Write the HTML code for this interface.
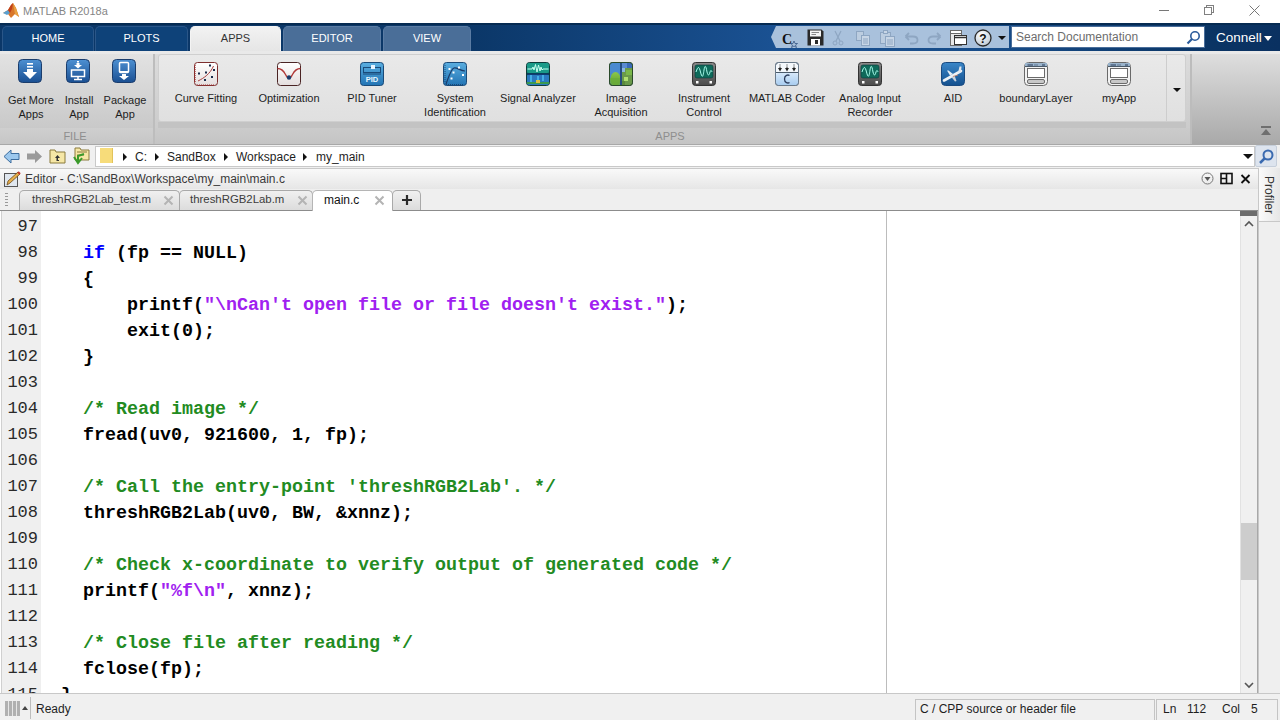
<!DOCTYPE html>
<html><head><meta charset="utf-8">
<style>
*{box-sizing:border-box;margin:0;padding:0}
html,body{width:1280px;height:720px;overflow:hidden;background:#fff;font-family:"Liberation Sans",sans-serif;position:relative}
.a{position:absolute}
#title{left:0;top:0;width:1280px;height:23px;background:#fff}
#title .t{left:23px;top:5px;font-size:11px;color:#858585}
#band{left:0;top:23px;width:1280px;height:28px;background:#0b3a6c;border-top:2px solid #062b52}
.tab{top:1px;height:26px;border-radius:5px 5px 0 0;color:#fff;font-size:11px;text-align:center;line-height:22px;background:#0e4279;border:1px solid #2a5688;border-bottom:none}
.tab.ctx{background:#4a6e98;border-color:#5b7ca3}
.tab.act{background:linear-gradient(#f2f2f2,#e4e4e4);color:#333;border-color:#f4f4f4;height:28px}
#ribbon{left:0;top:51px;width:1280px;height:93px;background:linear-gradient(#e6e6e6,#d2d2d2)}
#addr{left:0;top:144px;width:1280px;height:24px;background:#f0f0f0}
#edtitle{left:0;top:168px;width:1258px;height:21px;background:linear-gradient(#fafafa,#e6e6e6)}
#tabs{left:0;top:189px;width:1258px;height:22px;background:#efefef;border-bottom:1px solid #8c8c8c}
#code{left:0;top:211px;width:1258px;height:482px;background:#fff;overflow:hidden}
#gutter{left:1px;top:0;width:40px;height:482px;background:#efefef;border-left:1px solid #d0d0d0}
#status{left:0;top:693px;width:1280px;height:27px;background:#f0f0f0;border-top:1px solid #c8c8c8}
.nm{color:#2a2a2a;font-size:17px !important}
.ln{font-family:"Liberation Mono",monospace;font-size:18.33px;line-height:26px;white-space:pre}
.ln b{font-weight:bold}
.kw{color:#0000ff}
.str{color:#a020f0}
.cm{color:#228b22}
.lab{width:82px;text-align:center;font-size:11px;line-height:14px;color:#1e1e1e;white-space:nowrap}
.rl{font-size:11px;text-align:center;line-height:14px}
.ic{position:absolute;width:24px;height:24px}
.tri{width:0;height:0;border-top:4px solid transparent;border-bottom:4px solid transparent;border-left:4px solid #111}
.at{top:6px;font-size:12px;color:#1e1e1e}
.etab{top:1px;height:20px;border:1px solid #a9a9a9;border-bottom:none;border-radius:5px 5px 0 0;background:linear-gradient(#f0f0f0,#dcdcdc)}
.etab.act{background:#fff;height:22px;border-color:#b5b5b5}
.etab span{position:absolute;top:2px;font-size:11.4px;color:#3c3c3c;white-space:nowrap}
.etab i{position:absolute;top:-1px;font-style:normal;font-size:17px;color:#bcbcbc}
</style></head><body>
<div id="title" class="a"><div class="t a">MATLAB R2018a</div>
<svg class="a" style="left:2px;top:2px" width="18" height="17" viewBox="0 0 18 17"><path d="M1 11 L6 8 L9 3 L11 1 L14 6 L17 15 L13 12 L9 16 L6 12 Z" fill="#d8762a"/><path d="M1 11 L6 8 L8 11 L5 13 Z" fill="#5aa0d0"/><path d="M6 8 L9 3 L11 1 L10 7 L8 11 Z" fill="#c0401a"/><path d="M11 1 L14 6 L17 15 L13 12 Z" fill="#e8a040"/></svg>
 <div class="a" style="left:1159px;top:10px;width:10px;height:1px;background:#777"></div>
 <div class="a" style="left:1206px;top:5px;width:8px;height:8px;border:1px solid #808080"></div>
 <div class="a" style="left:1204px;top:7px;width:8px;height:8px;border:1px solid #808080;background:#fff"></div>
 <svg class="a" style="left:1249px;top:5px" width="11" height="11" viewBox="0 0 11 11"><path d="M0.5 0.5 L10.5 10.5 M10.5 0.5 L0.5 10.5" stroke="#777" stroke-width="1"/></svg>
</div>
<div id="band" class="a">
 <div class="a" style="left:0;top:0;width:1280px;height:26px;background:linear-gradient(90deg,#0b3768 0,#0b3768 470px,#1a5192 772px,#174c88 1000px,#0a3464 1210px,#0a3161 1280px)"></div>
 <div class="tab a" style="left:2px;width:92px">HOME</div>
 <div class="tab a" style="left:95px;width:93px">PLOTS</div>
 <div class="tab a act" style="left:190px;width:91px">APPS</div>
 <div class="tab a ctx" style="left:283px;width:98px">EDITOR</div>
 <div class="tab a ctx" style="left:383px;width:88px">VIEW</div>

 <div class="a" style="left:771px;top:1px;width:238px;height:22px;background:#a9c1dc;clip-path:polygon(5px 0,100% 0,100% 100%,5px 100%,0 50%)"></div>
 <div class="a" style="left:1011px;top:1px;width:194px;height:22px;background:#fff;border:1px solid #4a6e9a"></div>
 <div class="a" style="left:1016px;top:5px;font-size:12px;color:#6d6d6d">Search Documentation</div>

 <svg class="a" style="left:782px;top:6px" width="17" height="17" viewBox="0 0 17 17"><text x="0" y="13" font-family="Liberation Serif" font-weight="bold" font-size="14" fill="#111">C</text><path d="M12 10 L13 12.5 L15.5 12.5 L13.5 14 L14.5 16.5 L12 15 L9.5 16.5 L10.5 14 L8.5 12.5 L11 12.5 Z" fill="none" stroke="#2a4a7a" stroke-width="0.7"/></svg>
 <svg class="a" style="left:807px;top:4px" width="17" height="17" viewBox="0 0 17 17"><path d="M0.5 0.5 H14.5 L16.5 2.5 V16.5 H0.5 Z" fill="#2a2a2a"/><rect x="3" y="1.5" width="11" height="6" fill="#f4f4f4"/><path d="M4.5 3.5 H12 M4.5 5.5 H9" stroke="#888"/><rect x="4" y="10" width="9" height="6.5" fill="#fff"/><rect x="8" y="11" width="3" height="4" fill="#2a2a2a"/></svg>
 <svg class="a" style="left:832px;top:5px" width="12" height="16" viewBox="0 0 12 16"><path d="M3 1 L8 11 M9 1 L4 11" stroke="#8ea6c2" stroke-width="1.2"/><circle cx="3" cy="13" r="2" fill="none" stroke="#8ea6c2"/><circle cx="9" cy="13" r="2" fill="none" stroke="#8ea6c2"/></svg>
 <svg class="a" style="left:856px;top:5px" width="14" height="16" viewBox="0 0 14 16"><rect x="0.5" y="1.5" width="7" height="9" fill="#bccde0" stroke="#8ea6c2"/><rect x="5.5" y="5.5" width="8" height="10" fill="#c8d6e6" stroke="#8ea6c2"/><path d="M7 9 H12 M7 11 H12 M7 13 H12" stroke="#8ea6c2"/></svg>
 <svg class="a" style="left:880px;top:5px" width="15" height="17" viewBox="0 0 15 17"><rect x="0.5" y="2.5" width="10" height="11" fill="#bccde0" stroke="#8ea6c2"/><rect x="3.5" y="0.5" width="4" height="3" fill="#c8d6e6" stroke="#8ea6c2"/><rect x="5.5" y="6.5" width="9" height="10" fill="#c8d6e6" stroke="#8ea6c2"/><path d="M7 10 H13 M7 12 H13 M7 14 H13" stroke="#8ea6c2"/></svg>
 <svg class="a" style="left:904px;top:7px" width="15" height="13" viewBox="0 0 15 13"><path d="M1.5 4.5 L5 1 M1.5 4.5 L5 8 M1.5 4.5 H9 C12 4.5 13.5 6 13.5 8 C13.5 10 12 11.5 9 11.5 H6" stroke="#8ea6c2" stroke-width="1.8" fill="none"/></svg>
 <svg class="a" style="left:927px;top:7px" width="15" height="13" viewBox="0 0 15 13"><path d="M13.5 4.5 L10 1 M13.5 4.5 L10 8 M13.5 4.5 H6 C3 4.5 1.5 6 1.5 8 C1.5 10 3 11.5 6 11.5 H9" stroke="#8ea6c2" stroke-width="1.8" fill="none"/></svg>
 <svg class="a" style="left:950px;top:5px" width="17" height="17" viewBox="0 0 17 17"><rect x="0.5" y="0.5" width="11" height="3" fill="#fff" stroke="#6a6a6a"/><rect x="0.5" y="3.5" width="11" height="12" fill="#e8e8e8" stroke="#6a6a6a"/><rect x="4.5" y="5.5" width="12" height="9" fill="#fff" stroke="#333"/><path d="M4.5 7.5 H16.5" stroke="#333" stroke-width="1.5"/></svg>
 <svg class="a" style="left:974px;top:4px" width="18" height="18" viewBox="0 0 18 18"><defs><radialGradient id="gh" cx="0.4" cy="0.3" r="0.8"><stop offset="0" stop-color="#fff"/><stop offset="1" stop-color="#b8c4d0"/></radialGradient></defs><circle cx="9" cy="9" r="8" fill="url(#gh)" stroke="#2a2a2a" stroke-width="1.3"/><text x="9" y="13.5" text-anchor="middle" font-family="Liberation Sans" font-weight="bold" font-size="12" fill="#111">?</text></svg>
 <div class="a" style="left:998px;top:11px;width:0;height:0;border-left:4px solid transparent;border-right:4px solid transparent;border-top:4px solid #111"></div>
 <svg class="a" style="left:1186px;top:5px" width="15" height="15" viewBox="0 0 15 15"><circle cx="9" cy="6" r="4.2" fill="none" stroke="#2a5a9a" stroke-width="1.6"/><path d="M6 9 L1.5 13.5" stroke="#2a5a9a" stroke-width="2.2"/></svg>
 <div class="a" style="left:1216px;top:5px;font-size:13.5px;color:#fff">Connell</div>
 <div class="a" style="left:1264px;top:11px;width:0;height:0;border-left:4px solid transparent;border-right:4px solid transparent;border-top:5px solid #fff"></div>
</div>
<div id="ribbon" class="a">
 <div class="a" style="left:0;top:0;width:1280px;height:3px;background:#e9e9e9"></div>
 <div class="a" style="left:0;top:3px;width:153px;height:74px;background:linear-gradient(#e2e2e2,#c9c9c9)"></div>
 <div class="a" style="left:0;top:77px;width:153px;height:16px;background:linear-gradient(#cfcfcf,#c6c6c6)"></div>
 <div class="a rl" style="left:60px;top:78px;width:30px;color:#8e8e8e">FILE</div>
 <div class="a" style="left:153px;top:3px;width:2px;height:90px;background:#bdbdbd"></div>
 <div class="a" style="left:155px;top:3px;width:1036px;height:90px;background:linear-gradient(#dcdcdc,#c8c8c8)"></div>
 <div class="a" style="left:158px;top:3px;width:1028px;height:68px;background:linear-gradient(#e9e9e9,#e0e0e0);border:1px solid #cfcfcf;border-radius:3px"></div>
 <div class="a" style="left:158px;top:71px;width:1028px;height:6px;background:#c3c3c3"></div>
 <div class="a" style="left:155px;top:77px;width:1036px;height:16px;background:linear-gradient(#cbcbcb,#c4c4c4)"></div>
 <div class="a rl" style="left:640px;top:78px;width:60px;color:#8e8e8e">APPS</div>
 <div class="a" style="left:1166px;top:4px;width:1px;height:66px;background:#cdcdcd"></div>
 <div class="a" style="left:1173px;top:37px;width:0;height:0;border-left:4px solid transparent;border-right:4px solid transparent;border-top:4px solid #111"></div>
 <div class="a" style="left:1190px;top:3px;width:2px;height:90px;background:#bcbcbc"></div>
 <div class="a" style="left:1192px;top:3px;width:88px;height:90px;background:linear-gradient(#dedede,#a9a9a9)"></div>
 <div class="a" style="left:1261px;top:75px;width:10px;height:2px;background:#6f6f6f"></div>
 <div class="a" style="left:1261px;top:78px;width:0;height:0;border-left:5px solid transparent;border-right:5px solid transparent;border-bottom:6px solid #6f6f6f"></div>
 <div class="a lab" style="left:-10px;top:42px">Get More<br>Apps</div>
<div class="a lab" style="left:38px;top:42px">Install<br>App</div>
<div class="a lab" style="left:84px;top:42px">Package<br>App</div>
<div class="a lab" style="left:165px;top:40px">Curve Fitting</div>
<div class="a lab" style="left:248px;top:40px">Optimization</div>
<div class="a lab" style="left:331px;top:40px">PID Tuner</div>
<div class="a lab" style="left:414px;top:40px">System<br>Identification</div>
<div class="a lab" style="left:497px;top:40px">Signal Analyzer</div>
<div class="a lab" style="left:580px;top:40px">Image<br>Acquisition</div>
<div class="a lab" style="left:663px;top:40px">Instrument<br>Control</div>
<div class="a lab" style="left:746px;top:40px">MATLAB Coder</div>
<div class="a lab" style="left:829px;top:40px">Analog Input<br>Recorder</div>
<div class="a lab" style="left:912px;top:40px">AID</div>
<div class="a lab" style="left:995px;top:40px">boundaryLayer</div>
<div class="a lab" style="left:1078px;top:40px">myApp</div>
ICONS
<svg class="a" style="left:18px;top:8px" width="24" height="24" viewBox="0 0 24 24"><defs><linearGradient id="gb" x1="0" y1="0" x2="0" y2="1"><stop offset="0" stop-color="#4d90d2"/><stop offset="1" stop-color="#1a4f92"/></linearGradient>
<linearGradient id="gb2" x1="0" y1="0" x2="0" y2="1"><stop offset="0" stop-color="#5aaee0"/><stop offset="1" stop-color="#2274b4"/></linearGradient>
<linearGradient id="gw" x1="0" y1="0" x2="0" y2="1"><stop offset="0" stop-color="#ffffff"/><stop offset="1" stop-color="#e4dede"/></linearGradient>
<linearGradient id="gsig" x1="0" y1="0" x2="0" y2="1"><stop offset="0" stop-color="#1e8a7a"/><stop offset="0.5" stop-color="#12a090"/><stop offset="0.52" stop-color="#0a3d7a"/><stop offset="1" stop-color="#3aa0d0"/></linearGradient>
<linearGradient id="gmon" x1="0" y1="0" x2="0" y2="1"><stop offset="0" stop-color="#8a8a8a"/><stop offset="1" stop-color="#4a4a4a"/></linearGradient>
<linearGradient id="gaid" x1="0" y1="0" x2="0" y2="1"><stop offset="0" stop-color="#3a86c8"/><stop offset="1" stop-color="#14508e"/></linearGradient>
<linearGradient id="gcod" x1="0" y1="0" x2="0" y2="1"><stop offset="0" stop-color="#d6e8fa"/><stop offset="1" stop-color="#a9cdf0"/></linearGradient>
<linearGradient id="gimg" x1="0" y1="0" x2="0" y2="1"><stop offset="0" stop-color="#8cc84a"/><stop offset="1" stop-color="#5a9a2a"/></linearGradient></defs><rect x="0.5" y="0.5" width="23" height="23" rx="4" fill="url(#gb)" stroke="#1b3d6c"/><rect x="9" y="4" width="6" height="1.6" fill="#fff"/><rect x="9" y="7" width="6" height="1.6" fill="#fff"/><path d="M9 10 H15 V13 H19 L12 20 L5 13 H9 Z" fill="#fff"/></svg>
<svg class="a" style="left:66px;top:8px" width="24" height="24" viewBox="0 0 24 24"><rect x="0.5" y="0.5" width="23" height="23" rx="4" fill="url(#gb)" stroke="#1b3d6c"/><rect x="11" y="2" width="2" height="1.5" fill="#fff"/><path d="M10.5 4 H13.5 V6 H16 L12 9.5 L8 6 H10.5 Z" fill="#fff"/><rect x="5.5" y="11" width="13" height="6.5" fill="none" stroke="#fff" stroke-width="1.5"/><path d="M12 17.5 V20 M8 20.5 H16" stroke="#fff" stroke-width="1.5"/></svg>
<svg class="a" style="left:112px;top:8px" width="24" height="24" viewBox="0 0 24 24"><rect x="0.5" y="0.5" width="23" height="23" rx="4" fill="url(#gb)" stroke="#1b3d6c"/><rect x="7.5" y="3.5" width="9" height="10" rx="1" fill="none" stroke="#fff" stroke-width="1.5"/><rect x="8" y="12" width="8" height="1.5" fill="#fff"/><path d="M10 15 H14 V17 H17 L12 21 L7 17 H10 Z" fill="#fff"/></svg>
<svg class="a" style="left:194px;top:11px" width="24" height="24" viewBox="0 0 24 24"><rect x="0.5" y="0.5" width="23" height="23" rx="3" fill="url(#gw)" stroke="#7d2e2e"/><path d="M1 3 V21 M3 23 H21" stroke="#a03030" stroke-dasharray="1 1" stroke-width="1.2"/><path d="M4 19 C10 16 16 12 19.5 4" stroke="#a84040" stroke-width="1" fill="none"/><g fill="#1a2a4a"><rect x="4" y="10.5" width="2" height="2"/><rect x="11" y="9.5" width="2" height="2"/><rect x="15" y="2.5" width="2" height="2"/><rect x="19" y="7" width="2" height="2"/><rect x="17" y="14" width="2" height="2"/><rect x="10" y="17" width="2" height="2"/></g></svg>
<svg class="a" style="left:277px;top:11px" width="24" height="24" viewBox="0 0 24 24"><rect x="0.5" y="0.5" width="23" height="23" rx="3" fill="url(#gw)" stroke="#4a2424"/><path d="M0.5 6.5 C4 6.5 6.5 8.5 8.5 12.5 C9.7 15 10.8 16 12 16 C13.2 16 14.3 15 15.5 12.5 C17.5 8.5 20 6.5 23.5 6.5" stroke="#b03838" stroke-width="1.3" fill="none"/><circle cx="12" cy="15.5" r="2.2" fill="#1a3a6a"/></svg>
<svg class="a" style="left:360px;top:11px" width="24" height="24" viewBox="0 0 24 24"><rect x="0.5" y="0.5" width="23" height="23" rx="3" fill="url(#gb2)" stroke="#1a4a78"/><rect x="3.5" y="5.5" width="17" height="5" fill="none" stroke="#1a4a78" stroke-width="1"/><rect x="11" y="3" width="4" height="4" fill="#e8f4ff"/><path d="M3 12 H21" stroke="#1a4a78"/><text x="12" y="20" text-anchor="middle" font-family="Liberation Sans" font-weight="bold" font-size="7.5" fill="#e8f8ff">PID</text></svg>
<svg class="a" style="left:443px;top:11px" width="24" height="24" viewBox="0 0 24 24"><rect x="0.5" y="0.5" width="23" height="23" rx="3" fill="url(#gb2)" stroke="#1a4a78"/><path d="M2 3 V21 M3 22.5 H21" stroke="#1a4a78" stroke-dasharray="1 1"/><path d="M3 22 C6 14 8 7 11 6 C14 5 17 9 22 9" stroke="#1a3a68" stroke-width="1.2" fill="none"/><g fill="#fff"><rect x="5.5" y="6" width="2" height="2"/><rect x="9.5" y="9.5" width="2" height="2"/><rect x="15" y="4.5" width="2" height="2"/><rect x="19" y="12" width="2" height="2"/><rect x="7.5" y="15.5" width="2" height="2"/></g></svg>
<svg class="a" style="left:526px;top:11px" width="24" height="24" viewBox="0 0 24 24"><rect x="0.5" y="0.5" width="23" height="23" rx="3" fill="#127a6a" stroke="#0f3a3a"/><rect x="1" y="1" width="22" height="10" rx="2" fill="#1a9a88"/><rect x="1" y="12" width="22" height="11" rx="2" fill="#2a7ac0"/><path d="M1 12 H23" stroke="#0a2a5a" stroke-width="1.5"/><path d="M1 21 H23" stroke="#3a9a50" stroke-width="2"/><path d="M1.5 7 H6 L7 5 L8 8 L9.5 2.5 L11 10 L12.5 3 L14 9 L15 5 L16 8 L17 7 H22.5" stroke="#c8fff0" stroke-width="1" fill="none"/><path d="M5 13 V20 M12 14 V21 M17 13 V19" stroke="#4cc0f0" stroke-width="1.5"/><rect x="10" y="18" width="4" height="3" fill="#d8c040"/></svg>
<svg class="a" style="left:609px;top:11px" width="24" height="24" viewBox="0 0 24 24"><rect x="0.5" y="0.5" width="23" height="23" rx="3" fill="#4a88c8" stroke="#2a4a2a"/><rect x="1" y="1" width="10" height="10" fill="#4a8ad0"/><ellipse cx="6.5" cy="17" rx="5" ry="7" fill="url(#gimg)"/><path d="M1 23 V16 H11 V23 Z" fill="#6aac3a" opacity="0.8"/><g><rect x="13" y="1" width="10" height="22" fill="#6a9a4a"/><rect x="13" y="1" width="5" height="5" fill="#5a8ad0"/><rect x="18" y="1" width="5" height="5" fill="#3a6ab8"/><rect x="13" y="6" width="3" height="4" fill="#8ab8e0"/><rect x="17" y="8" width="6" height="5" fill="#7ab84a"/><rect x="15" y="15" width="4" height="4" fill="#b0e070"/><rect x="13" y="19" width="3" height="4" fill="#5a8a3a"/></g><path d="M12 1 V23" stroke="#1a3a6a" stroke-width="1.5"/><rect x="0.5" y="0.5" width="23" height="23" rx="3" fill="none" stroke="#2a4a2a"/></svg>
<svg class="a" style="left:692px;top:11px" width="24" height="24" viewBox="0 0 24 24"><rect x="0.5" y="0.5" width="23" height="23" rx="3" fill="url(#gmon)" stroke="#333"/><rect x="3" y="3" width="18" height="13" rx="2" fill="#0e6a5a" stroke="#0a3a3a" stroke-width="0.6"/><path d="M4 10 C6 4 7 4 8.5 10 C10 16 11 16 12 8 C13 2 14 4 15 10 C16 14 17 14 18 10 C18.7 8 19.3 8 20 10" stroke="#aaffee" stroke-width="1" fill="none"/><rect x="4" y="19" width="2.5" height="2.5" fill="#fff"/><rect x="17.5" y="19" width="2.5" height="2.5" fill="#fff"/></svg>
<svg class="a" style="left:775px;top:11px" width="24" height="24" viewBox="0 0 24 24"><rect x="0.5" y="0.5" width="23" height="23" rx="3" fill="#f4f8fc" stroke="#6a7a8a"/><path d="M1 10.5 H23" stroke="#4a5a6a"/><rect x="1" y="11" width="22" height="12" rx="2" fill="url(#gcod)"/><g stroke="#222" stroke-width="1"><path d="M5 2.5 V3.5 M12 2.5 V3.5 M19 2.5 V3.5 M5 4.5 V6 M12 4.5 V6 M19 4.5 V6"/></g><g fill="#222"><path d="M3 6 H7 L5 9.5 Z M10 6 H14 L12 9.5 Z M17 6 H21 L19 9.5 Z"/></g><path d="M14.5 13.5 C13 12.5 9.5 13 9.5 17 C9.5 21 13 21.5 14.5 20.5" stroke="#2a3a5a" stroke-width="1.3" fill="none"/><rect x="0.5" y="0.5" width="23" height="23" rx="3" fill="none" stroke="#6a7a8a"/></svg>
<svg class="a" style="left:858px;top:11px" width="24" height="24" viewBox="0 0 24 24"><rect x="0.5" y="0.5" width="23" height="23" rx="3" fill="url(#gmon)" stroke="#333"/><rect x="3" y="3" width="18" height="13" rx="2" fill="#0e6a5a" stroke="#0a3a3a" stroke-width="0.6"/><path d="M4 10 C6 4 7 4 8.5 10 C10 16 11 16 12 8 C13 2 14 4 15 10 C16 14 17 14 18 10 C18.7 8 19.3 8 20 10" stroke="#aaffee" stroke-width="1" fill="none"/><rect x="4" y="19" width="2.5" height="2.5" fill="#fff"/><rect x="17.5" y="19" width="2.5" height="2.5" fill="#fff"/></svg>
<svg class="a" style="left:941px;top:11px" width="24" height="24" viewBox="0 0 24 24"><rect x="0.5" y="0.5" width="23" height="23" rx="4" fill="url(#gaid)" stroke="#1a4a80"/><path d="M3 18.5 L20 9" stroke="#eef2f6" stroke-width="2.6" stroke-linecap="round"/><path d="M17 11 L18.5 4.5 L20.5 4.5 L20 10 Z" fill="#dfe6ee"/><path d="M9 13.5 L6 8.5 L7.5 8.5 L12 12 Z" fill="#e8eef4"/><path d="M10.5 15 L14 19.5 L15.5 19 L13.5 13.5 Z" fill="#c8d2dc"/><path d="M12 14.5 L17 13" stroke="#d08060" stroke-width="0.8"/></svg>
<svg class="a" style="left:1024px;top:11px" width="24" height="24" viewBox="0 0 24 24"><rect x="0.5" y="0.5" width="23" height="23" rx="4" fill="#f2f2f2" stroke="#6a6a6a"/><path d="M1 1 H23 V4.5 H1 Z" fill="#9ab4cc"/><path d="M3.5 3 H9 M10.5 3 H11.5 M12.5 3 H13.5 M18 3 H21" stroke="#1a2a4a" stroke-width="0.9"/><path d="M1 4.5 H23" stroke="#4a5a6a"/><rect x="3.5" y="6.5" width="17" height="9" fill="#fff" stroke="#6a6a6a"/><rect x="3.5" y="17.5" width="17" height="4" rx="1.5" fill="#c8c8c8" stroke="#6a6a6a"/></svg>
<svg class="a" style="left:1107px;top:11px" width="24" height="24" viewBox="0 0 24 24"><rect x="0.5" y="0.5" width="23" height="23" rx="4" fill="#f2f2f2" stroke="#6a6a6a"/><path d="M1 1 H23 V4.5 H1 Z" fill="#9ab4cc"/><path d="M3.5 3 H9 M10.5 3 H11.5 M12.5 3 H13.5 M18 3 H21" stroke="#1a2a4a" stroke-width="0.9"/><path d="M1 4.5 H23" stroke="#4a5a6a"/><rect x="3.5" y="6.5" width="17" height="9" fill="#fff" stroke="#6a6a6a"/><rect x="3.5" y="17.5" width="17" height="4" rx="1.5" fill="#c8c8c8" stroke="#6a6a6a"/></svg>
</div>
<div id="addr" class="a">
 <div class="a" style="left:0;top:0;width:1280px;height:1px;background:#a8a8a8"></div>
 <div class="a" style="left:95px;top:2px;width:1160px;height:21px;background:#fff;border:1px solid #c9c9c9"></div>
 <div class="a" style="left:1255px;top:1px;width:22px;height:22px;background:#dde4ee;border:1px solid #c6cfdb;border-radius:2px"></div>
 <svg class="a" style="left:3px;top:5px" width="17" height="15" viewBox="0 0 17 15"><path d="M1 7.5 L8 1 V4.5 H16 V10.5 H8 V14 Z" fill="#9cc8ee" stroke="#3d6d9e" stroke-width="1"/></svg>
 <svg class="a" style="left:26px;top:5px" width="17" height="15" viewBox="0 0 17 15"><path d="M16 7.5 L9 1 V4.5 H1 V10.5 H9 V14 Z" fill="#9a9a9a"/></svg>
 <svg class="a" style="left:49px;top:4px" width="17" height="16" viewBox="0 0 17 16"><path d="M1 2 H6 L7 4 H16 V15 H1 Z" fill="#f6e7a6" stroke="#8a7a3c"/><path d="M8.5 7 L6 10 H7.5 V13 H10 V12 H9 V10 H11 Z" fill="#333"/></svg>
 <svg class="a" style="left:72px;top:3px" width="18" height="18" viewBox="0 0 18 18"><path d="M3 1 H8 L9 3 H17 V13 H3 Z" fill="#f6e7a6" stroke="#8a7a3c"/><path d="M5 5 H15 M5 8 H12" stroke="#8a7a3c"/><path d="M2 10 L6 16 L10 11 M6 16 V9 L12 7" stroke="#3a9a2a" stroke-width="2" fill="none"/></svg>
 <div class="a" style="left:100px;top:4px;width:13px;height:15px;background:#f7dc7a;border-right:1px solid #e2c35a"></div>
 <div class="a tri" style="left:123px;top:9px"></div>
 <div class="a at" style="left:135px">C:</div>
 <div class="a tri" style="left:155px;top:9px"></div>
 <div class="a at" style="left:167px">SandBox</div>
 <div class="a tri" style="left:224px;top:9px"></div>
 <div class="a at" style="left:236px">Workspace</div>
 <div class="a tri" style="left:303px;top:9px"></div>
 <div class="a at" style="left:316px">my_main</div>
 <div class="a" style="left:1243px;top:10px;width:0;height:0;border-left:5px solid transparent;border-right:5px solid transparent;border-top:5px solid #111"></div>
 <svg class="a" style="left:1258px;top:4px" width="17" height="17" viewBox="0 0 17 17"><circle cx="10" cy="7" r="4.5" fill="none" stroke="#3a6ab0" stroke-width="2"/><path d="M7 10 L2 15" stroke="#3a6ab0" stroke-width="2.5"/></svg>
</div>
<div id="edtitle" class="a">
 <div class="a" style="left:0;top:0;width:1258px;height:1px;background:#c9c9c9"></div>
 <svg class="a" style="left:3px;top:3px" width="18" height="17" viewBox="0 0 18 17"><rect x="1.5" y="2.5" width="13" height="13" fill="#dfe6ee" stroke="#555"/><path d="M4 14 L5 10 L15 1 L17 3 L7 12 Z" fill="#e8b04a" stroke="#6d4a1a" stroke-width="0.8"/><path d="M15 1 L17 3" stroke="#c0392b" stroke-width="2"/></svg>
 <div class="a" style="left:25px;top:4px;font-size:12px;color:#3a3a3a">Editor - C:\SandBox\Workspace\my_main\main.c</div>
 <svg class="a" style="left:1201px;top:4px" width="13" height="13" viewBox="0 0 13 13"><circle cx="6.5" cy="6.5" r="5.5" fill="none" stroke="#777"/><path d="M3.5 5 H9.5 L6.5 9 Z" fill="#555"/></svg>
 <svg class="a" style="left:1220px;top:4px" width="13" height="13" viewBox="0 0 13 13"><rect x="1" y="1.5" width="11" height="10" fill="none" stroke="#111" stroke-width="1.6"/><path d="M6.5 1.5 V11.5 M1 6.5 H6.5" stroke="#111" stroke-width="1.6"/></svg>
 <svg class="a" style="left:1240px;top:6px" width="11" height="10" viewBox="0 0 11 10"><path d="M1.5 1 L9.5 9 M9.5 1 L1.5 9" stroke="#111" stroke-width="1.8"/></svg>
</div>
<div id="tabs" class="a">
 <div class="a" style="left:5px;top:4px;width:3px;height:14px;background:repeating-linear-gradient(#999 0 1px,transparent 1px 3px)"></div>
 <div class="a etab" style="left:19px;width:161px"><span style="left:12px">threshRGB2Lab_test.m</span><svg style="position:absolute;top:4px;left:143px" width="11" height="11" viewBox="0 0 11 11"><path d="M1.5 1.5 L9.5 9.5 M9.5 1.5 L1.5 9.5" stroke="#b4b4b4" stroke-width="2"/></svg></div>
 <div class="a etab" style="left:179px;width:134px"><span style="left:10px">threshRGB2Lab.m</span><svg style="position:absolute;top:4px;left:117px" width="11" height="11" viewBox="0 0 11 11"><path d="M1.5 1.5 L9.5 9.5 M9.5 1.5 L1.5 9.5" stroke="#b4b4b4" stroke-width="2"/></svg></div>
 <div class="a etab act" style="left:312px;width:81px"><span style="left:11px;color:#111;font-size:12px">main.c</span><svg style="position:absolute;top:4px;left:61px" width="11" height="11" viewBox="0 0 11 11"><path d="M1.5 1.5 L9.5 9.5 M9.5 1.5 L1.5 9.5" stroke="#b4b4b4" stroke-width="2"/></svg></div>
 <div class="a etab" style="left:392px;width:29px"><svg style="position:absolute;left:8px;top:3px" width="12" height="12" viewBox="0 0 12 12"><path d="M6 1 V11 M1 6 H11" stroke="#2a2a2a" stroke-width="2.2"/></svg></div>
</div>
<div id="code" class="a">
 <div id="gutter" class="a"></div>
 <div class="a" style="left:886px;top:0;width:1px;height:482px;background:#bcbcbc"></div>
 <div class="a" style="left:1240px;top:0;width:18px;height:482px;background:#f0f0f0;border-left:1px solid #e2e2e2"></div>
 <div class="a" style="left:1240px;top:0;width:18px;height:5px;background:#6b6b6b"></div>
 <svg class="a" style="left:1243px;top:8px" width="12" height="10" viewBox="0 0 12 10"><path d="M2 7 L6 3 L10 7" stroke="#555" stroke-width="1.6" fill="none"/></svg>
 <svg class="a" style="left:1243px;top:469px" width="12" height="10" viewBox="0 0 12 10"><path d="M2 3 L6 7 L10 3" stroke="#555" stroke-width="1.6" fill="none"/></svg>
 <div class="a" style="left:1241px;top:312px;width:16px;height:57px;background:#cdcdcd"></div>
 <div class="a" style="left:1257px;top:0;width:1px;height:482px;background:#a8a8a8"></div>

<div id="lines" class="a" style="left:39px;top:4px">
<div class="ln"> </div>
<div class="ln"><b>    <span class="kw">if</span> (fp == NULL)</b></div>
<div class="ln"><b>    {</b></div>
<div class="ln"><b>        printf(<span class="str">"\nCan't open file or file doesn't exist."</span>);</b></div>
<div class="ln"><b>        exit(0);</b></div>
<div class="ln"><b>    }</b></div>
<div class="ln"> </div>
<div class="ln"><b>    <span class="cm">/* Read image */</span></b></div>
<div class="ln"><b>    fread(uv0, 921600, 1, fp);</b></div>
<div class="ln"> </div>
<div class="ln"><b>    <span class="cm">/* Call the entry-point 'threshRGB2Lab'. */</span></b></div>
<div class="ln"><b>    threshRGB2Lab(uv0, BW, &amp;xnnz);</b></div>
<div class="ln"> </div>
<div class="ln"><b>    <span class="cm">/* Check x-coordinate to verify output of generated code */</span></b></div>
<div class="ln"><b>    printf(<span class="str">"%f\n"</span>, xnnz);</b></div>
<div class="ln"> </div>
<div class="ln"><b>    <span class="cm">/* Close file after reading */</span></b></div>
<div class="ln"><b>    fclose(fp);</b></div>
<div class="ln"><b>  }</b></div>
</div>
<div id="nums" class="a" style="left:0;top:3px;width:38px;text-align:right">
<div class="ln nm">97</div>
<div class="ln nm">98</div>
<div class="ln nm">99</div>
<div class="ln nm">100</div>
<div class="ln nm">101</div>
<div class="ln nm">102</div>
<div class="ln nm">103</div>
<div class="ln nm">104</div>
<div class="ln nm">105</div>
<div class="ln nm">106</div>
<div class="ln nm">107</div>
<div class="ln nm">108</div>
<div class="ln nm">109</div>
<div class="ln nm">110</div>
<div class="ln nm">111</div>
<div class="ln nm">112</div>
<div class="ln nm">113</div>
<div class="ln nm">114</div>
<div class="ln nm">115</div>
</div>

</div>
<div class="a" style="left:1258px;top:168px;width:22px;height:525px;background:#efefef;border-left:1px solid #c8c8c8"></div>
<div class="a" style="left:1259px;top:168px;width:21px;height:54px;background:linear-gradient(90deg,#fafafa,#e6e6e6);border-bottom:1px solid #c8c8c8"></div>
<div class="a" style="left:1262px;top:176px;font-size:12px;color:#333;writing-mode:vertical-rl">Profiler</div>
<div id="status" class="a">
 <div class="a" style="left:5px;top:7px;width:15px;height:15px;background:repeating-linear-gradient(90deg,#b0b0b0 0 3px,#e6e6e6 3px 4px)"></div>
 <div class="a" style="left:22px;top:12px;width:0;height:0;border-left:3px solid transparent;border-right:3px solid transparent;border-bottom:4px solid #444"></div>
 <div class="a" style="left:30px;top:3px;width:1px;height:22px;background:#bdbdbd"></div>
 <div class="a" style="left:36px;top:8px;font-size:12px;color:#1e1e1e">Ready</div>
 <div class="a" style="left:915px;top:5px;width:240px;height:22px;border:1px solid #c4c4c4;border-bottom:none"></div>
 <div class="a" style="left:920px;top:8px;font-size:12px;color:#1e1e1e">C / CPP source or header file</div>
 <div class="a" style="left:1156px;top:5px;width:122px;height:22px;border:1px solid #c4c4c4;border-bottom:none"></div>
 <div class="a" style="left:1163px;top:8px;font-size:12px;color:#1e1e1e">Ln</div>
 <div class="a" style="left:1187px;top:8px;font-size:12px;color:#1e1e1e">112</div>
 <div class="a" style="left:1222px;top:8px;font-size:12px;color:#1e1e1e">Col</div>
 <div class="a" style="left:1251px;top:8px;font-size:12px;color:#1e1e1e">5</div>
</div>
</body></html>
